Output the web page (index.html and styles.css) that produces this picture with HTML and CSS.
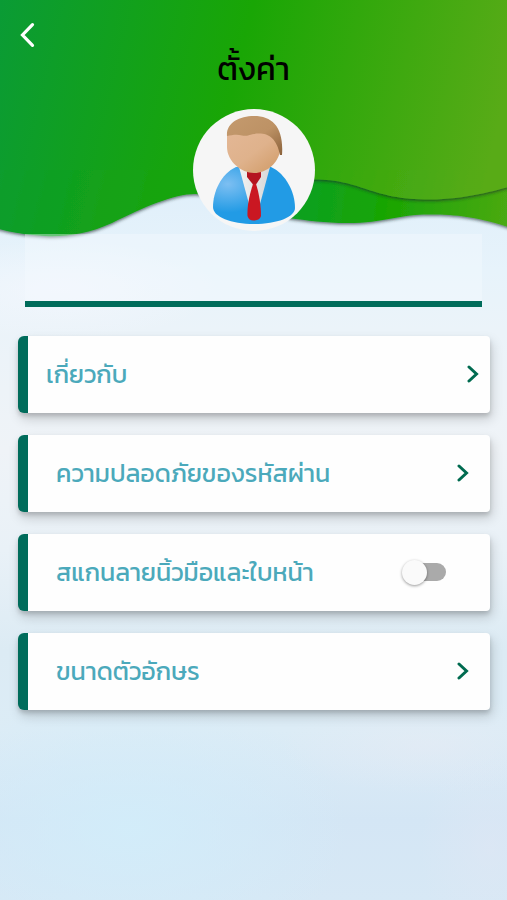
FILE: index.html
```html
<!DOCTYPE html>
<html lang="th">
<head>
<meta charset="utf-8">
<title>ตั้งค่า</title>
<link rel="stylesheet" href="styles.css">
</head>
<body>
<main class="screen">
  <svg class="waves" viewBox="0 0 507 260" aria-hidden="true">
    <defs>
      <linearGradient id="top" gradientUnits="userSpaceOnUse" x1="0" y1="0" x2="500" y2="120">
        <stop offset="0" stop-color="#0a9b35"/>
        <stop offset=".48" stop-color="#19a605"/>
        <stop offset="1" stop-color="#58ab17"/>
      </linearGradient>
      <linearGradient id="low" gradientUnits="userSpaceOnUse" x1="295" y1="190" x2="507" y2="215">
        <stop offset="0" stop-color="#0ca022"/>
        <stop offset=".42" stop-color="#18a504"/>
        <stop offset="1" stop-color="#4aa912"/>
      </linearGradient>
      <filter id="shade" x="-10%" y="-10%" width="120%" height="125%">
        <feDropShadow dx="0" dy="1.5" stdDeviation="1.8" flood-color="#1b2a2a" flood-opacity=".65"/>
      </filter>
      <clipPath id="lowclip"><path d="M250 150H507V227C476 217 456 214.500 430 214.500C396 214.500 386 223 347 223C325 223 307 220.500 289 218Z"/></clipPath>
    </defs>
    <path filter="url(#shade)" fill="url(#low)" d="M250 150H520V231C480 217 458 214.500 430 214.500C396 214.500 386 223 347 223C325 223 307 220.500 289 218Z"/>
    <path filter="url(#shade)" fill="url(#top)" d="M-10-10H290V200L195 194C174 194 144 207 112 223C88 234 65 237 45 236C27 235 14 233-10 227Z"/>
    <g clip-path="url(#lowclip)"><path filter="url(#shade)" fill="url(#top)" d="M240 100H520V184C503 188 470 199.500 430 199.500C369 199.500 363 179.500 314 179.500H240Z"/></g>
    <path fill="url(#top)" d="M0 0H507V170H290V190H210V170H0Z"/>
  </svg>

  <header class="header">
    <a class="back" aria-label="ย้อนกลับ">
      <svg viewBox="0 0 18 26"><path d="M13.500 2.700 3.500 13 13.500 23.300"/></svg>
    </a>
    <h1 class="title">ตั้งค่า</h1>
    <svg class="avatar" viewBox="0 0 122 122">
      <defs>
        <linearGradient id="hair" x1="0" y1="0" x2="1" y2="1"><stop stop-color="#c49a6e"/><stop offset=".55" stop-color="#bd9265"/><stop offset="1" stop-color="#8b623b"/></linearGradient>
        <linearGradient id="skin" x1="0" y1="0" x2="1" y2="1"><stop stop-color="#e3b795"/><stop offset=".5" stop-color="#dfb28c"/><stop offset="1" stop-color="#d09a65"/></linearGradient>
        <radialGradient id="suit" cx=".18" cy=".3" r=".5"><stop stop-color="#7dbff2"/><stop offset="1" stop-color="#229be5"/></radialGradient>
        <linearGradient id="shirt"><stop stop-color="#f2f2f2"/><stop offset="1" stop-color="#d8d8d8"/></linearGradient>
      </defs>
      <circle cx="61" cy="61" r="61" fill="#f6f6f6"/>
      <path fill="url(#suit)" d="M43 58C28 65 20 83 20 98C20 108 38 115 61 115S102 108 102 99C102 83 93 65 78 58Z"/>
      <path fill="url(#shirt)" d="M46 58 56 95 61 104 67 95 77 58Z"/>
      <path fill="#b41420" d="M54 62H68V68L63 75.500H60L54 68Z"/>
      <path fill="#ca1722" d="M60 75H63C66 84 68 96 68 107Q67 111 61.500 111.500T54.500 107C54 96 57 84 60 75Z"/>
      <path fill="url(#skin)" d="M34 24H80L87 42C85 54 74 64 61 64S34 52 34 38Z"/>
      <path fill="url(#hair)" d="M34 27C33 14 46 7 61 7C80 7 91 19 89 46H87C84 30 76 24.500 66 24.500C57 24.500 54 28 49 26.500C44 25 39 26 34 27Z"/>
    </svg>
  </header>

  <section class="profile"></section>

  <nav class="list">
    <a class="card card-flush"><span>เกี่ยวกับ</span><svg class="chevron" viewBox="0 0 12 18"><path d="M2 2 9.500 9 2 16"/></svg></a>
    <a class="card"><span>ความปลอดภัยของรหัสผ่าน</span><svg class="chevron" viewBox="0 0 12 18"><path d="M2 2 9.500 9 2 16"/></svg></a>
    <div class="card card-switch"><span>สแกนลายนิ้วมือและใบหน้า</span><i class="switch"><b class="knob"></b></i></div>
    <a class="card"><span>ขนาดตัวอักษร</span><svg class="chevron" viewBox="0 0 12 18"><path d="M2 2 9.500 9 2 16"/></svg></a>
  </nav>
</main>
</body>
</html>
```
FILE: styles.css
```css
* { box-sizing: border-box; }
body { margin: 0; font-family: Kanit, Prompt, "Noto Sans", sans-serif; }
.screen {
  position: relative;
  height: 900px;
  overflow: hidden;
  background:
    radial-gradient(ellipse 150px 50px at 430px 745px, rgba(233, 235, 244, .45), transparent),
    radial-gradient(ellipse 70px 100px at 490px 850px, rgba(223, 231, 244, .6), transparent),
    radial-gradient(ellipse 220px 140px at 130px 830px, rgba(210, 237, 250, .9), transparent),
    radial-gradient(ellipse 160px 50px at 60px 290px, rgba(244, 247, 253, .8), transparent),
    linear-gradient(#e0effa 190px, #e7f3fb 270px, #ebf3f9 330px, #eff3f7 450px, #e9f1f7 550px, #dcebf4 650px, #dcecf6 730px, #d4e6f5 820px, #d7e8f5 900px);
}
.waves { position: absolute; inset: 0 0 auto; display: block; width: 507px; height: 260px; }
.header {
  position: relative;
  display: flex;
  flex-direction: column;
  align-items: center;
  height: 234px;
}
.back { align-self: flex-start; width: 18px; height: 26px; margin: 22px 0 0 19px; }
.back svg { display: block; width: 18px; height: 26px; }
.back path { fill: none; stroke: #fff; stroke-width: 3.2; stroke-linecap: round; stroke-linejoin: miter; }
.title { margin: 0; height: 61px; font-size: 32px; line-height: 42px; font-weight: 400; color: #000; }
.avatar { width: 122px; height: 122px; flex: none; }
.profile {
  position: relative;
  height: 72.500px;
  margin: 0 25px;
  background: rgba(245, 250, 255, .4);
  border-bottom: 6px solid #006c5b;
}
.list { position: relative; display: flex; flex-direction: column; gap: 22px; padding: 29.500px 17px 0 18px; }
.card {
  display: flex;
  align-items: center;
  justify-content: space-between;
  height: 77px;
  padding: 0 21px 1px 28px;
  border-left: 10px solid #006c5b;
  border-radius: 6px 4px 4px 6px;
  background: #fefefe;
  box-shadow: 0 3px 4px rgba(0, 0, 0, .15), 2px 6px 12px rgba(0, 0, 0, .17);
  color: #4ba9bb;
  font-size: 25px;
  font-weight: 400;
  line-height: 40px;
}
.card-flush { padding: 0 11px 1px 18px; }
.card-switch { padding-right: 44px; }
.chevron { width: 12px; height: 18px; flex: none; }
.chevron path { fill: none; stroke: #006b50; stroke-width: 3; stroke-linecap: round; stroke-linejoin: miter; }
.switch { display: flex; align-items: center; width: 40px; height: 18px; border-radius: 9px; background: #aaa; }
.knob { width: 25px; height: 25px; margin-left: -4px; flex: none; border-radius: 50%; background: #fafafa; box-shadow: 0 1px 3px rgba(0, 0, 0, .4); }
```
